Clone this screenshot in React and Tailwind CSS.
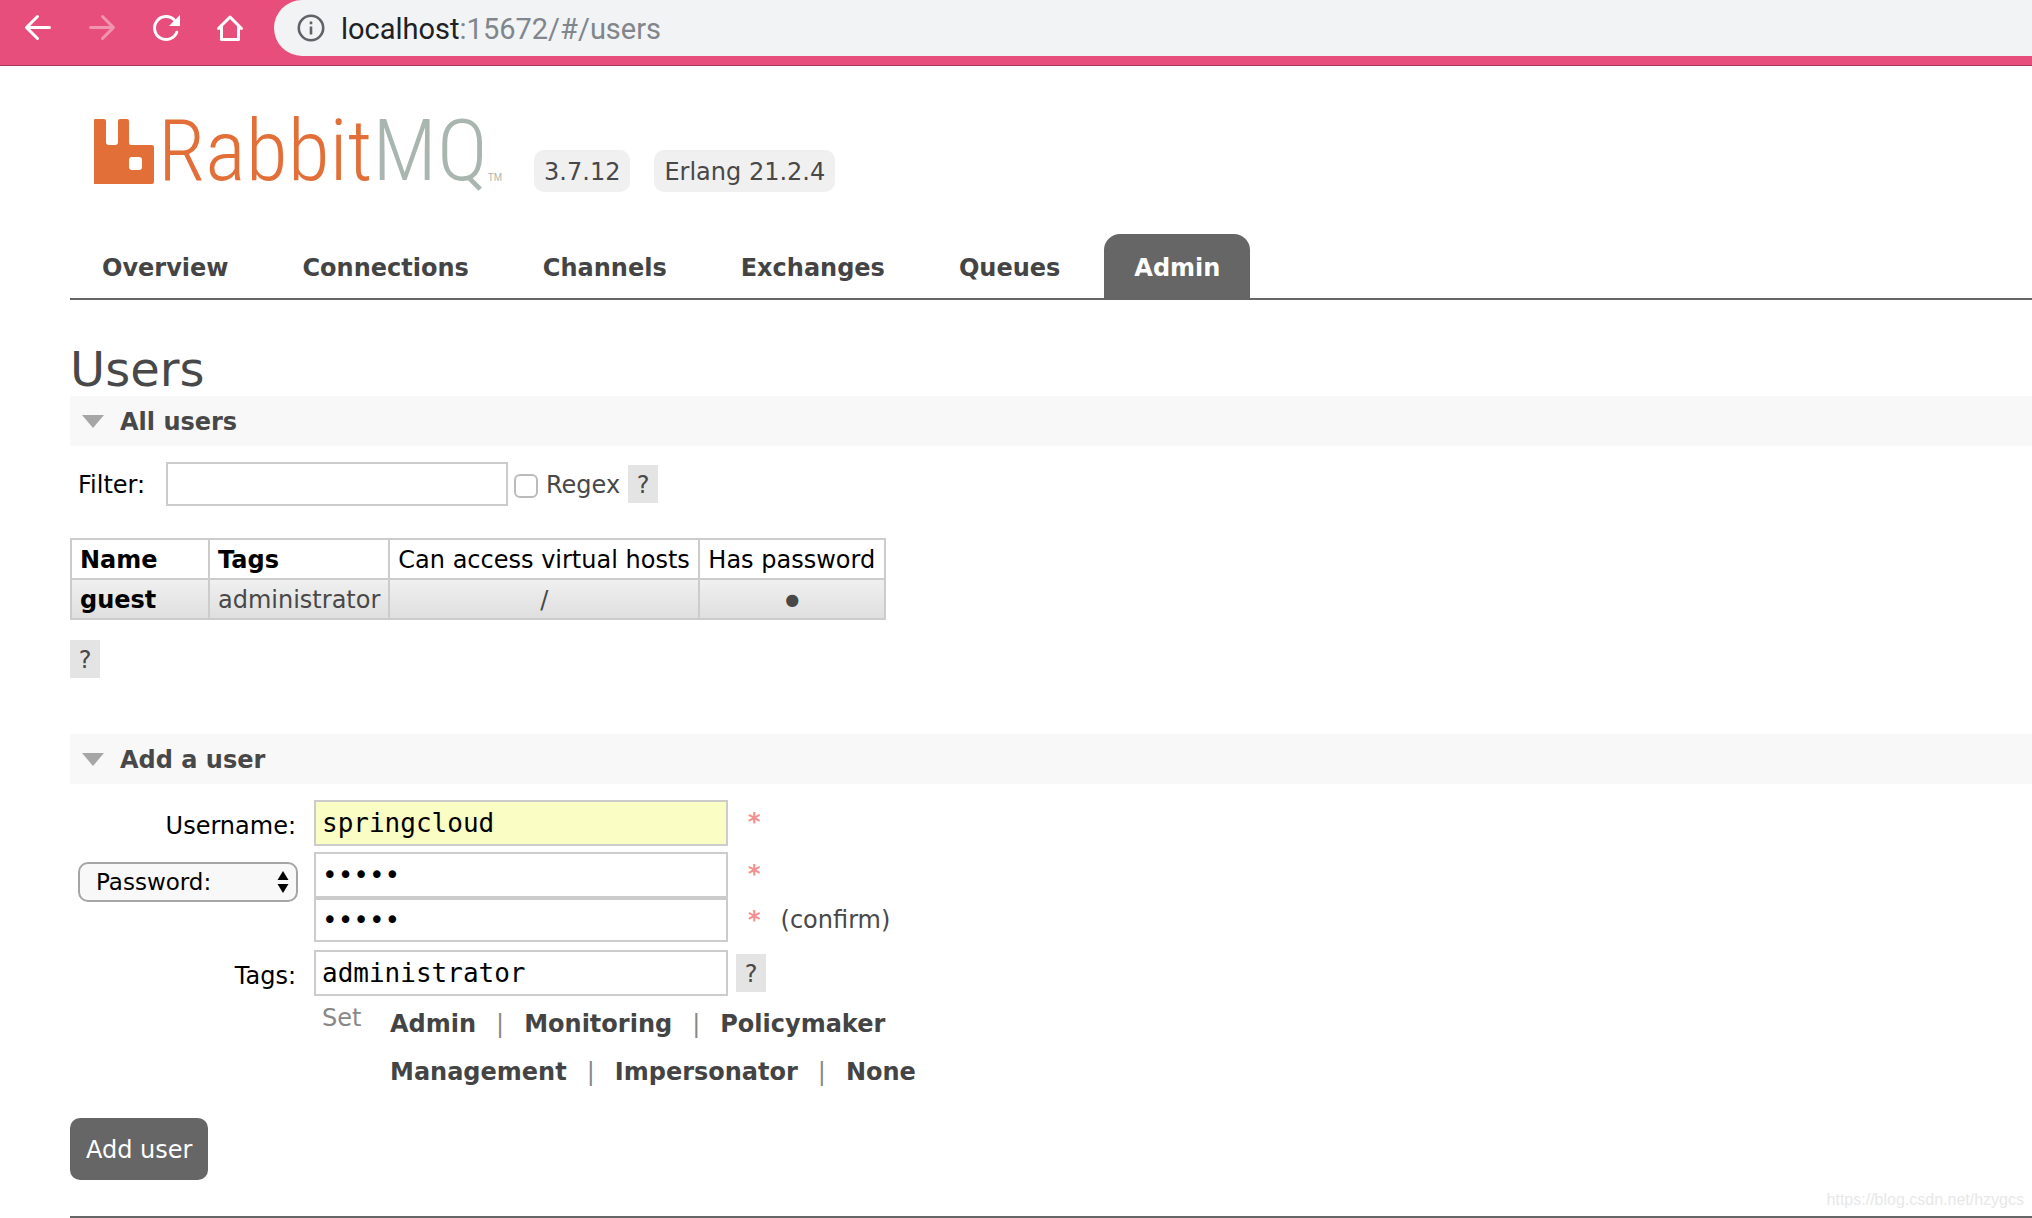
import { useState } from 'react';

const tabs = ['Overview', 'Connections', 'Channels', 'Exchanges', 'Queues', 'Admin'];

const users = [
    { name: 'guest', tags: 'administrator', vhosts: '/', hasPassword: true },
];

const tagRows = [
    [['Admin', 'administrator'], ['Monitoring', 'monitoring'], ['Policymaker', 'policymaker']],
    [['Management', 'management'], ['Impersonator', 'impersonator'], ['None', '']],
];

const ToolbarIcon = ({ label, className, children }) => (
    <button type="button" aria-label={label} className={className}>
        <svg
            width="40"
            height="40"
            viewBox="0 0 40 40"
            fill="none"
            stroke="currentColor"
            strokeWidth="3"
            strokeLinecap="round"
            strokeLinejoin="round"
        >
            {children}
        </svg>
    </button>
);

const BrowserBar = () => (
    <div className="flex h-[66px] border-b border-[#a83a5c] bg-[#e84e7b]">
        <div className="flex h-14 w-[274px] shrink-0 items-center gap-6 pl-[18px]">
            <ToolbarIcon label="Back" className="text-white">
                <path d="M31.500 19.500H9M19.500 8.500L8.500 19.500L19.500 30.500" />
            </ToolbarIcon>
            <ToolbarIcon label="Forward" className="text-white/40">
                <path d="M8.500 19.500H31M20.500 8.500L31.500 19.500L20.500 30.500" />
            </ToolbarIcon>
            <ToolbarIcon label="Reload" className="text-white">
                <path d="M28.500 12.200A11.500 11.500 0 1 0 30.800 24.200" />
                <path d="M34 7V18H23Z" fill="currentColor" stroke="none" />
            </ToolbarIcon>
            <ToolbarIcon label="Home" className="text-white">
                <path d="M8.500 20.500L20 9L31.500 20.500M11.500 18.500V31.500H28.500V18.500" />
            </ToolbarIcon>
        </div>
        <div className="flex h-14 flex-1 items-center gap-4 rounded-l-full bg-[#f1f3f5] pl-[23px]">
            <svg width="28" height="28" viewBox="0 0 28 28" fill="none" stroke="#5f6368" strokeWidth="2.600">
                <circle cx="14" cy="14" r="12.200" />
                <path d="M14 12.500V20.500M14 7.500V10.300" />
            </svg>
            <span className="pt-0.5 font-[Roboto,sans-serif] text-[29px] leading-8 text-[#80868b]">
                <span className="text-[#202124]">localhost</span>:15672/#/users
            </span>
        </div>
    </div>
);

const Logo = () => (
    <a href="#/" className="flex items-end text-[#e36f38]">
        <svg width="60" height="66" viewBox="0 0 60 66" fill="currentColor">
            <path
                fillRule="evenodd"
                d="M0 2Q0 1 1 1H10Q12 1 12 3V24Q12 27 15 27H21Q24 27 24 24V3Q24 1 26 1H33Q35 1 35 3V25Q35 27 37 27H58Q60 27 60 29V64Q60 66 58 66H0ZM38 39Q35 39 35 42V49Q35 52 38 52H45Q48 52 48 49V42Q48 39 45 39Z"
            />
        </svg>
        <span className="ml-1 h-[66px] font-['Roboto_Condensed_Light','Roboto_Condensed',sans-serif] text-[86px] leading-[66px] font-light">
            Rabbit<span className="text-[#a9b5af]">MQ</span>
        </span>
        <span className="font-['Liberation_Sans',sans-serif] text-[10px] leading-3 text-[#a9b5af]">TM</span>
    </a>
);

const Help = () => (
    <button type="button" className="h-[38px] w-[30px] shrink-0 bg-[#e4e4e4] pt-0.5 text-center leading-9">?</button>
);

const SectionHeader = ({ title }) => (
    <h2 className="flex h-[50px] items-center gap-4 bg-[#f8f8f8] pt-0.5 pl-3 font-bold">
        <svg width="22" height="14" viewBox="0 0 22 14" fill="#a6a6a6">
            <path d="M0 0H22L11 13Z" />
        </svg>
        {title}
    </h2>
);

const Required = () => <span className="ml-5 h-10 pt-1.5 leading-8 font-bold text-[#f49090]">*</span>;

const inputClass = 'w-[414px] border-2 border-[#ccc] px-1.5 font-[DejaVu_Sans_Mono,monospace] text-[26px] text-black outline-none';
const cellClass = 'border-2 border-[#ccc] px-2 pt-0.5';

const App = () => {
    const [filter, setFilter] = useState('');
    const [regex, setRegex] = useState(false);
    const [username, setUsername] = useState('springcloud');
    const [password, setPassword] = useState('guest');
    const [confirm, setConfirm] = useState('guest');
    const [tags, setTags] = useState('administrator');

    const shown = users.filter((u) => u.name.includes(filter));

    return (
        <div className="relative min-h-screen overflow-x-hidden bg-white font-[Verdana,DejaVu_Sans,sans-serif] text-2xl leading-7 text-[#484848]">
            <BrowserBar />

            <div className="pl-[70px]">
                <header className="flex items-end pt-[52px] pl-6">
                    <Logo />
                    <div className="flex gap-6 pl-8">
                        <span className="-mb-2 rounded-[10px] bg-[#f0f0f0] px-2.5 pt-0.5 leading-10">3.7.12</span>
                        <span className="-mb-2 rounded-[10px] bg-[#f0f0f0] px-2.5 pt-0.5 leading-10">Erlang 21.2.4</span>
                    </div>
                </header>

                <nav className="mt-[50px] flex gap-3.5 border-b-2 border-[#666] pl-0.5 font-bold">
                    {tabs.map((tab) => (
                        <a
                            key={tab}
                            href={`#/${tab.toLowerCase()}`}
                            className={
                                tab === 'Admin'
                                    ? 'rounded-t-2xl bg-[#666] px-[30px] pt-1 leading-[60px] text-white'
                                    : 'px-[30px] pt-1 leading-[60px] text-[#444]'
                            }
                        >
                            {tab}
                        </a>
                    ))}
                </nav>

                <main>
                    <h1 className="pt-[42px] text-5xl leading-[54px]">Users</h1>

                    <SectionHeader title="All users" />
                    <div className="flex items-center pt-4 pl-2">
                        <label htmlFor="filter" className="w-[88px] pt-0.5 text-black">Filter:</label>
                        <input
                            id="filter"
                            type="text"
                            value={filter}
                            onChange={(e) => setFilter(e.target.value)}
                            className="h-11 w-[342px] border-2 border-[#ccc] px-1.5 outline-none"
                        />
                        <input
                            id="regex"
                            type="checkbox"
                            checked={regex}
                            onChange={(e) => setRegex(e.target.checked)}
                            className="mt-1 mr-2 ml-1.5 h-6 w-6 appearance-none rounded-md border-2 border-[#bbb] bg-white checked:bg-[#666]"
                        />
                        <label htmlFor="regex" className="mr-2 pt-0.5">Regex</label>
                        <Help />
                    </div>

                    <table className="mt-8 border-collapse">
                        <thead>
                            <tr className="h-10 text-left text-black">
                                <th className={`w-[138px] font-bold ${cellClass}`}>Name</th>
                                <th className={`w-[180px] font-bold ${cellClass}`}>Tags</th>
                                <th className={`w-[310px] font-normal whitespace-nowrap ${cellClass}`}>Can access virtual hosts</th>
                                <th className={`w-[186px] font-normal whitespace-nowrap ${cellClass}`}>Has password</th>
                            </tr>
                        </thead>
                        <tbody>
                            {shown.map((u) => (
                                <tr key={u.name} className="h-10 bg-linear-to-b from-[#f0f0f0] to-[#dfdfdf]">
                                    <td className={cellClass}>
                                        <a href={`#/users/${u.name}`} className="font-bold text-black">{u.name}</a>
                                    </td>
                                    <td className={cellClass}>{u.tags}</td>
                                    <td className={`text-center ${cellClass}`}>{u.vhosts}</td>
                                    <td className={`text-center text-base ${cellClass}`}>{u.hasPassword ? '●' : ''}</td>
                                </tr>
                            ))}
                        </tbody>
                    </table>
                    <div className="mt-5 mb-14 flex">
                        <Help />
                    </div>

                    <SectionHeader title="Add a user" />
                    <form onSubmit={(e) => e.preventDefault()}>
                        <div className="grid grid-cols-[228px_1fr] gap-x-4 pt-4">
                            <label htmlFor="username" className="pt-3 pr-0.5 text-right text-black">Username:</label>
                            <div className="flex">
                                <input
                                    id="username"
                                    type="text"
                                    value={username}
                                    onChange={(e) => setUsername(e.target.value)}
                                    className={`h-[46px] bg-[#fafdc4] ${inputClass}`}
                                />
                                <Required />
                            </div>

                            <div className="relative mt-4 ml-2 h-10">
                                <select
                                    aria-label="Password type"
                                    defaultValue="password"
                                    className="h-10 w-full appearance-none rounded-[10px] border-2 border-[#a5a5a5] bg-[#f8f8f8] pl-4 text-[23px] leading-7 text-black outline-none"
                                >
                                    <option value="password">Password:</option>
                                    <option value="hash">Hashed password:</option>
                                    <option value="none">No password</option>
                                </select>
                                <svg className="pointer-events-none absolute top-[9px] right-[9px]" width="12" height="22" viewBox="0 0 12 22" fill="#000">
                                    <path d="M6 0L11.500 9H0.500ZM6 22L0.500 13H11.500Z" />
                                </svg>
                            </div>
                            <div className="flex flex-col pt-1.5">
                                <div className="flex">
                                    <input
                                        type="password"
                                        aria-label="Password"
                                        value={password}
                                        onChange={(e) => setPassword(e.target.value)}
                                        className={`h-[46px] bg-white ${inputClass}`}
                                    />
                                    <Required />
                                </div>
                                <div className="flex">
                                    <input
                                        id="confirm"
                                        type="password"
                                        value={confirm}
                                        onChange={(e) => setConfirm(e.target.value)}
                                        className={`h-11 bg-white ${inputClass}`}
                                    />
                                    <Required />
                                    <label htmlFor="confirm" className="ml-5 leading-[44px]">(confirm)</label>
                                </div>
                            </div>

                            <label htmlFor="tags" className="pt-5 pr-0.5 text-right text-black">Tags:</label>
                            <div className="flex items-center gap-2 pt-2">
                                <input
                                    id="tags"
                                    type="text"
                                    value={tags}
                                    onChange={(e) => setTags(e.target.value)}
                                    className={`h-[46px] bg-white ${inputClass}`}
                                />
                                <Help />
                            </div>

                            <div className="col-start-2 flex pt-1 pl-2 text-[#888]">
                                <span className="w-[68px] leading-9">Set</span>
                                <div>
                                    {tagRows.map((row) => (
                                        <div key={row[0][0]} className="flex h-12 items-center">
                                            {row.map(([label, value], i) => (
                                                <span key={label} className="flex">
                                                    {i > 0 && <span className="mx-5">|</span>}
                                                    <button type="button" onClick={() => setTags(value)} className="font-bold text-[#444]">
                                                        {label}
                                                    </button>
                                                </span>
                                            ))}
                                        </div>
                                    ))}
                                </div>
                            </div>
                        </div>

                        <button type="submit" className="mt-[22px] h-[62px] rounded-[10px] bg-[#666] px-4 pt-0.5 text-white">
                            Add user
                        </button>
                    </form>
                </main>

                <footer className="mt-9 border-t-2 border-[#666]" />
            </div>

            <span className="absolute right-2 bottom-2 font-['Liberation_Sans',sans-serif] text-base leading-5 text-[#e8e8e8]">
                https://blog.csdn.net/hzygcs
            </span>
        </div>
    );
};

export default App;
